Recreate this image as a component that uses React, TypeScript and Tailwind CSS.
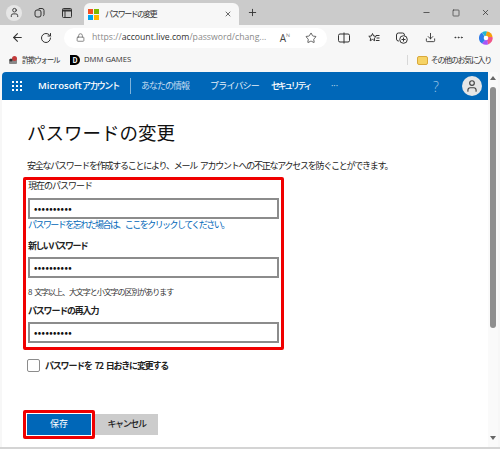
import React from "react";
import { ArrowLeft, RotateCw, Lock, Star, Download, MoreHorizontal, X, Plus, Minus, Square, User } from "lucide-react";

const jp = { fontFamily: '"Noto Sans CJK JP", sans-serif' };
const latin = { fontFamily: '"Open Sans", sans-serif' };

function Copilot() {
  return (
    <svg width="14" height="14" viewBox="0 0 14 14">
      <path d="M7 7 L3 1.500 A6.500 6.500 0 0 1 8 0.500 Z" fill="#22b8cf" />
      <path d="M6 7 L8 0.500 A6.500 6.500 0 0 1 13.500 6 Z" fill="#f59e0b" />
      <path d="M7 6 L13.500 6 A6.500 6.500 0 0 1 9 13.500 Z" fill="#f0568a" />
      <path d="M8 7 L9 13.500 A6.500 6.500 0 0 1 3 12.500 Z" fill="#a855f7" />
      <path d="M7 8 L3 12.500 A6.500 6.500 0 0 1 3 1.500 Z" fill="#2f7be8" />
      <circle cx="7" cy="7" r="2.300" fill="#ffffff" />
    </svg>
  );
}

function Win() {
  return (
    <div className="grid grid-cols-2 gap-[1px] w-[11px] h-[11px]">
      <div className="bg-[#f25022]" />
      <div className="bg-[#7fba00]" />
      <div className="bg-[#00a4ef]" />
      <div className="bg-[#ffb900]" />
    </div>
  );
}

function Field({ label, labelClass, first }: { label: string; labelClass: string; first?: boolean }) {
  return (
    <div>
      <div className={`text-[9px] leading-[12px] text-[#222] whitespace-nowrap ${labelClass}`}>{label}</div>
      <div className={`${first ? "mt-[6px]" : "mt-[5px]"} h-[21px] w-[251px] border-2 border-[#8c8c8c] bg-white flex items-center pl-[4px] text-[#111] text-[9px] font-bold tracking-[0.4px]`}>
        ••••••••••
      </div>
    </div>
  );
}

export default function App() {
  return (
    <div className="w-[500px] h-[449px] overflow-hidden bg-white flex flex-col" style={jp}>
      <div className="h-[25px] bg-[#cbcbcb] flex items-end shrink-0">
        <div className="w-[84px] h-full flex items-center text-[#333]">
          <div className="ml-[6px] w-[16px] h-[16px] rounded-full bg-[#e6e6e6] flex items-center justify-center">
            <User size={11} />
          </div>
          <svg className="ml-[12px]" width="12" height="12" viewBox="0 0 12 12" fill="none" stroke="#333" strokeWidth="1">
            <rect x="1" y="3" width="6" height="7" rx="2" />
            <path d="M4 2.500A2 2 0 0 1 6 1.500h2a2 2 0 0 1 2 2v4a2 2 0 0 1-1 1.600" />
          </svg>
          <svg className="ml-[16px]" width="10" height="10" viewBox="0 0 10 10" fill="none" stroke="#333" strokeWidth="1">
            <rect x="0.500" y="0.500" width="9" height="9" rx="1" />
            <path d="M0.500 2.500h9" strokeWidth="2" />
            <path d="M3 3v6.500" />
          </svg>
        </div>
        <div className="w-[155px] h-[22px] bg-[#f7f7f7] rounded-t-[6px] flex items-center pl-[4px] pr-[7px]">
          <Win />
          <span className="ml-[6px] text-[8px] tracking-[-1.600px] text-[#333] flex-1 whitespace-nowrap">パスワードの変更</span>
          <X size={8} strokeWidth={2} className="text-[#222]" />
        </div>
        <div className="h-full flex items-center ml-[8px]">
          <Plus size={11} className="text-[#333]" />
        </div>
        <div className="flex-1" />
        <div className="h-full flex items-center text-[#333] pr-[10px] gap-[21px]">
          <Minus size={9} />
          <Square size={8} />
          <X size={9} />
        </div>
      </div>

      <div className="h-[25px] bg-[#f7f7f7] flex items-center shrink-0 text-[#333]">
        <ArrowLeft size={13} className="ml-[11px]" />
        <RotateCw size={12} className="ml-[16px]" />
        <div className="ml-[12px] w-[263px] h-[20px] bg-white rounded-full flex items-center pl-[12px] pr-[10px]">
          <Lock size={9} className="text-[#666]" />
          <span className="ml-[7px] text-[8.700px] flex-1 whitespace-nowrap" style={latin}>
            <span className="text-[#8a8a8a]">https://</span>
            <span className="text-[#333]">account.live.com</span>
            <span className="text-[#8a8a8a]">/password/chang...</span>
          </span>
          <span className="text-[10px] leading-none mr-[15px] text-[#444]" style={latin}>A<span className="text-[5px] align-top">ℕ</span></span>
          <Star size={12} strokeWidth={1.500} />
        </div>
        <svg className="ml-[11px]" width="12" height="12" viewBox="0 0 12 12" fill="none" stroke="#333" strokeWidth="1">
          <rect x="0.500" y="2" width="11" height="8" rx="1.500" />
          <path d="M6 0.500v11" />
        </svg>
        <svg className="ml-[18px]" width="12" height="12" viewBox="0 0 12 12" fill="none" stroke="#333" strokeWidth="1">
          <path d="M4.500 1.500l1.100 2.500 2.600.3-1.900 1.800.5 2.700-2.300-1.400-2.300 1.400.5-2.700L.8 4.300l2.600-.3z" />
          <path d="M8 3.500h3.500M8.500 6h3M8 8.500h3.500" />
        </svg>
        <svg className="ml-[16px]" width="12" height="12" viewBox="0 0 12 12" fill="none" stroke="#333" strokeWidth="1">
          <path d="M3 9H2.500a2 2 0 0 1-2-2V3a2 2 0 0 1 2-2h4a2 2 0 0 1 2 2v.5" />
          <circle cx="7.500" cy="7.500" r="3.800" />
          <path d="M7.500 5.500v4M5.500 7.500h4" />
        </svg>
        <Download size={11} className="ml-[17px]" />
        <MoreHorizontal size={11} className="ml-[17px]" />
        <div className="ml-[15px] flex"><Copilot /></div>
      </div>

      <div className="h-[22px] bg-[#f7f7f7] flex items-center shrink-0 text-[#333] pb-[2px]">
        <svg className="ml-[8px]" width="10" height="10" viewBox="0 0 10 10">
          <rect x="1" y="4" width="8" height="5" rx="1" fill="#8a8a8a" />
          <circle cx="6.500" cy="3.500" r="2.500" fill="#c23b3b" />
          <circle cx="3" cy="5" r="1.500" fill="#333333" />
        </svg>
        <span className="ml-[4px] text-[7.500px] tracking-[-1.300px] w-[48px] whitespace-nowrap">詐欺ウォール</span>
        <span className="w-[10px] h-[10px] bg-black rounded-r-full text-white text-[7px] font-bold flex items-center justify-center">D</span>
        <span className="ml-[4px] text-[7.700px]" style={latin}>DMM GAMES</span>
        <div className="flex-1" />
        <div className="w-[1px] h-[10px] bg-[#d8d8d8] mr-[9px]" />
        <div className="w-[11px] h-[9px] bg-[#f6d365] border border-[#d9a93c] rounded-[2px] mr-[3px]" />
        <span className="mr-[9px] text-[8px] tracking-[-1.300px] whitespace-nowrap">その他のお気に入り</span>
      </div>

      <div className="flex-1 flex min-h-0 pl-[2px] pr-[2px] bg-[#f7f7f7]">
        <div className="flex-1 flex flex-col min-w-0 bg-white rounded-tl-[4px]">
          <div className="h-[28px] bg-[#0067b8] rounded-tl-[4px] flex items-center text-white shrink-0 whitespace-nowrap">
            <div className="ml-[10px] grid grid-cols-3 gap-[2px] w-[10px]">
              {Array.from({ length: 9 }).map((_, i) => (
                <div key={i} className="w-[2px] h-[2px] bg-white" />
              ))}
            </div>
            <span className="ml-[16px] w-[44px] text-[9.500px] font-semibold" style={latin}>Microsoft</span>
            <span className="text-[9px] font-medium tracking-[-1.600px] w-[48px]">アカウント</span>
            <div className="w-[1px] h-[16px] bg-[#7fb3db]" />
            <span className="ml-[10px] w-[48px] text-[9px] tracking-[-1px] text-[#c6dcf0]">あなたの情報</span>
            <span className="ml-[21px] w-[49px] text-[9px] tracking-[-0.800px] text-[#e6f0f8]">プライバシー</span>
            <span className="ml-[12px] w-[40px] text-[9px] font-medium tracking-[-2.400px]">セキュリティ</span>
            <span className="ml-[20px] text-[9px] text-[#cfe2f2]" style={latin}>···</span>
            <div className="flex-1" />
            <span className="text-[14px] font-light text-[#9cc5e6] mr-[23px]" style={latin}>?</span>
            <div className="w-[20px] h-[20px] rounded-full bg-[#e6e6e6] flex items-center justify-center mr-[6px] text-[#444]">
              <User size={14} />
            </div>
          </div>

          <div className="flex-1 pl-[25px] pt-[20px] min-h-0">
            <div className="text-[18.500px] leading-[24px] text-[#111] whitespace-nowrap">パスワードの変更</div>
            <div className="mt-[16px] text-[9px] tracking-[-1.250px] [word-spacing:2px] leading-[12px] text-[#222] whitespace-nowrap">
              安全なパスワードを作成することにより、メール アカウントへの不正なアクセスを防ぐことができます。
            </div>
            <div className="mt-[5px] -ml-[4px] w-[261px] h-[173px] border-[3px] border-[#f00000] rounded-[2px] pl-[2px]">
              <Field label="現在のパスワード" labelClass="tracking-[-1px]" first />
              <div className="text-[9px] tracking-[-1.550px] leading-[12px] text-[#0067b8] whitespace-nowrap">パスワードを忘れた場合は、ここをクリックしてください。</div>
              <div className="mt-[9px]"><Field label="新しいパスワード" labelClass="tracking-[-1.600px] font-bold" /></div>
              <div className="mt-[8px] text-[8px] tracking-[-1.050px] [word-spacing:2px] leading-[11px] text-[#333] whitespace-nowrap">8 文字以上、大文字と小文字の区別があります</div>
              <div className="mt-[8px]"><Field label="パスワードの再入力" labelClass="tracking-[-1.200px] font-bold" /></div>
            </div>
            <div className="mt-[9px] flex items-center">
              <div className="w-[13px] h-[13px] border border-[#8c8c8c] rounded-[2px] bg-white" />
              <span className="ml-[5px] text-[9px] tracking-[-1.200px] [word-spacing:2px] font-bold text-[#222] whitespace-nowrap">パスワードを 72 日おきに変更する</span>
            </div>
            <div className="mt-[37px] -ml-[4px] flex items-start">
              <div className="border-[3px] border-[#f00000] rounded-[2px] p-[1px] w-[72px] h-[29px]">
                <div className="h-full bg-[#0067b8] text-white text-[9px] flex items-center justify-center">保存</div>
              </div>
              <div className="mt-[4px] w-[63px] h-[21px] bg-[#cccccc] text-[#222] text-[9px] tracking-[-1.400px] font-medium flex items-center justify-center">キャンセル</div>
            </div>
          </div>
        </div>

        <div className="w-[10px] bg-[#fafafa] flex flex-col items-center shrink-0">
          <div className="mt-[4px] w-0 h-0 border-x-[3px] border-x-transparent border-b-[4px] border-b-[#666]" />
          <div className="mt-[7px] w-[6px] h-[241px] rounded-full bg-[#8f8f8f]" />
          <div className="flex-1" />
          <div className="mb-[7px] w-0 h-0 border-x-[3px] border-x-transparent border-t-[4px] border-t-[#666]" />
        </div>
      </div>
      <div className="h-[2px] bg-[#d4d4d4] shrink-0" />
    </div>
  );
}
